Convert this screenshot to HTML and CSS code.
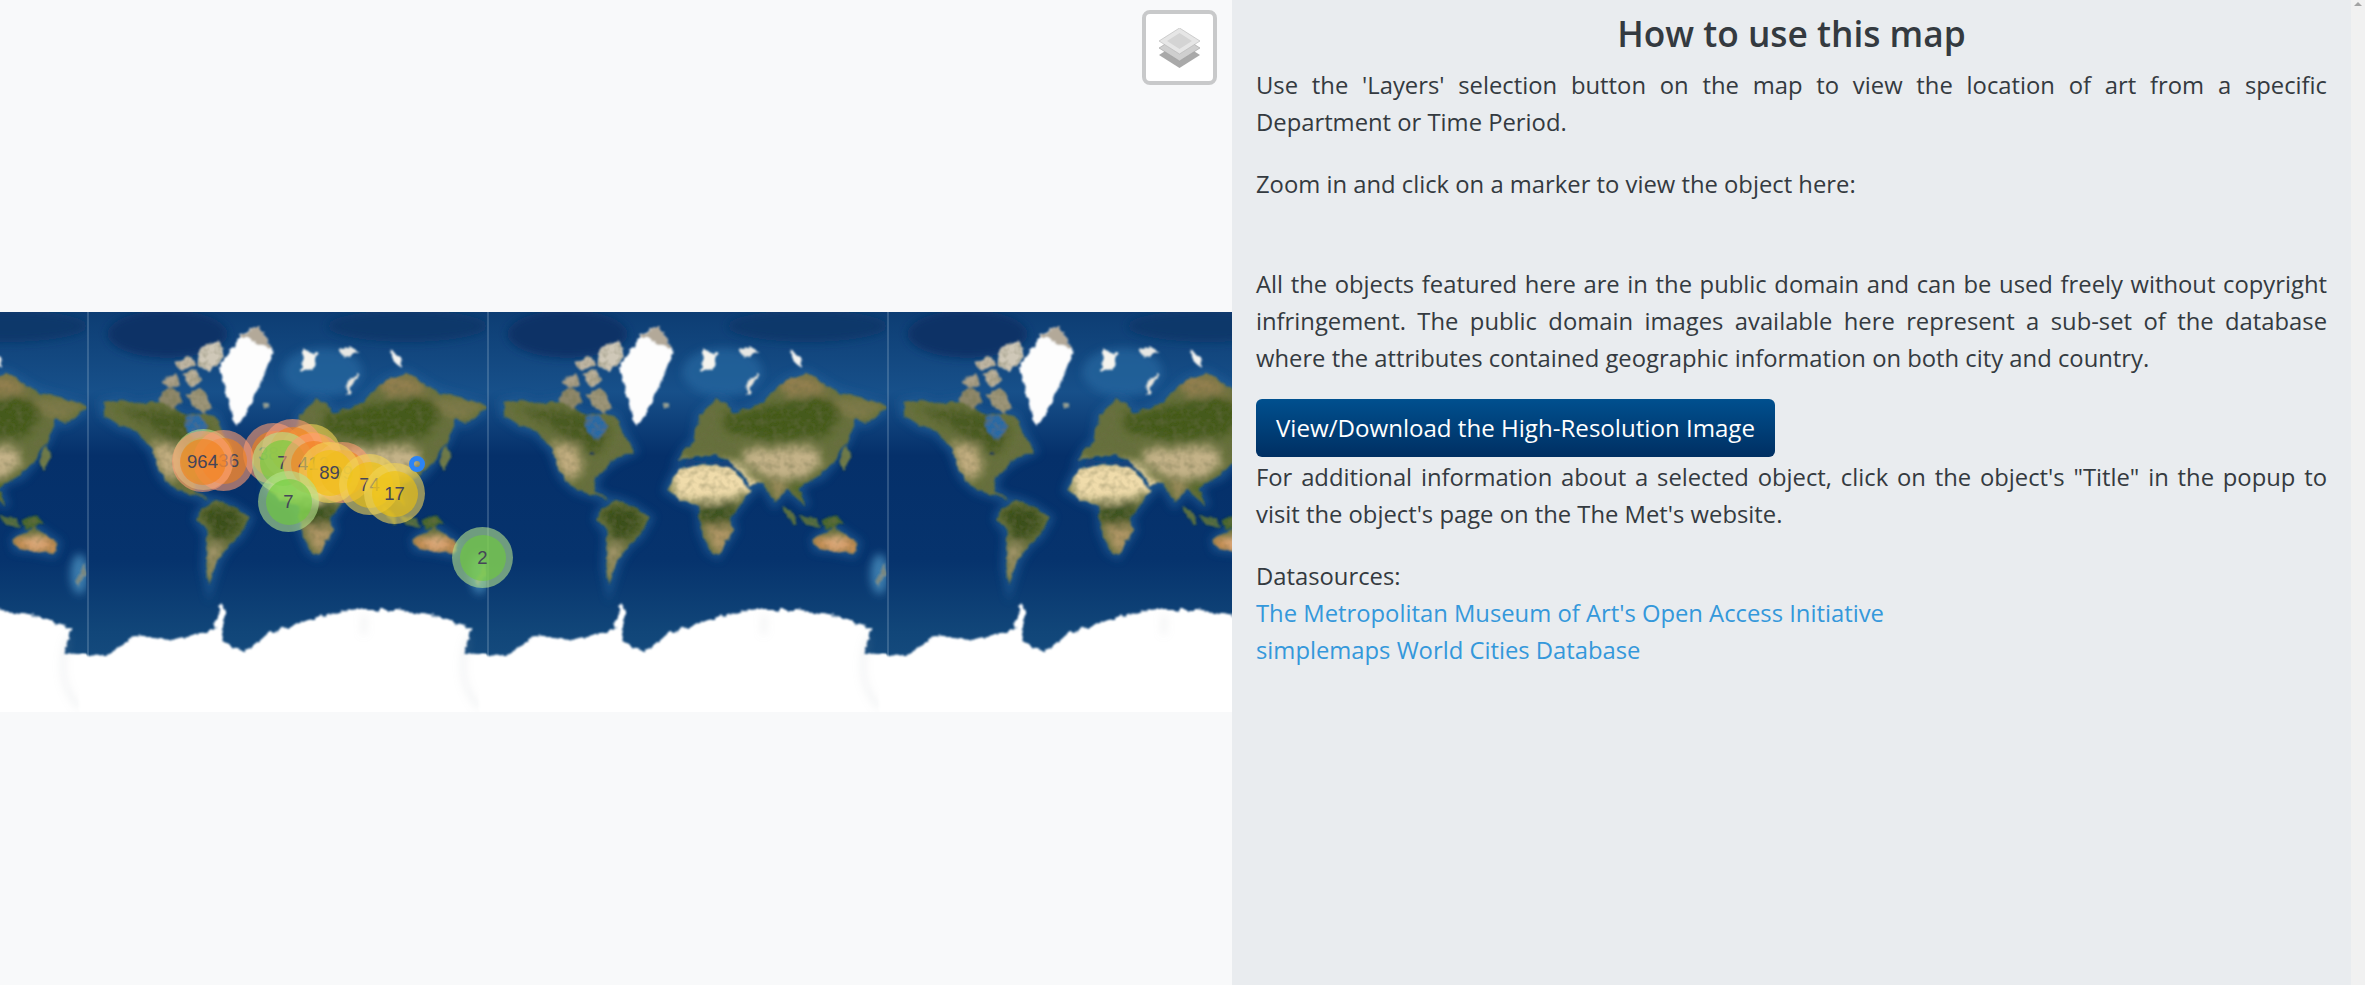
FILE: index.html
```html
<!DOCTYPE html>
<html lang="en">
<head>
  <meta charset="UTF-8" />
  <title>Met Art Map</title>
  <link rel="stylesheet" href="styles.css">
</head>
<body>

  <div class="map-col">
    <div class="map">
      <svg class="map-tiles" width="1232" height="400" viewBox="0 0 1232 400">
        <defs>
          <linearGradient id="sea" x1="0" y1="0" x2="0" y2="1">
            <stop offset="0" stop-color="#0d3d73"/>
            <stop offset="0.2" stop-color="#17508a"/>
            <stop offset="0.36" stop-color="#05306a"/>
            <stop offset="0.62" stop-color="#06336d"/>
            <stop offset="0.8" stop-color="#114679"/>
            <stop offset="1" stop-color="#1a5285"/>
          </linearGradient>
          <filter id="rough" x="-20" y="-20" width="460" height="440" filterUnits="userSpaceOnUse">
            <feTurbulence type="fractalNoise" baseFrequency="0.09" numOctaves="4" seed="4" result="n"/>
            <feDisplacementMap in="SourceGraphic" in2="n" scale="7" xChannelSelector="R" yChannelSelector="G" result="d"/>
            <feGaussianBlur in="d" stdDeviation="0.8" result="b"/>
            <feTurbulence type="fractalNoise" baseFrequency="0.14" numOctaves="2" seed="11"/>
            <feColorMatrix type="matrix" values="0 0 0 0 0.15  0 0 0 0 0.16  0 0 0 0 0.06  0.9 0 0 0 -0.36"/>
            <feComposite in2="b" operator="in" result="m"/>
            <feMerge>
              <feMergeNode in="b"/>
              <feMergeNode in="m"/>
            </feMerge>
          </filter>
          <filter id="ice" x="-20" y="-20" width="460" height="440" filterUnits="userSpaceOnUse">
            <feTurbulence type="fractalNoise" baseFrequency="0.14" numOctaves="4" seed="7" result="n"/>
            <feDisplacementMap in="SourceGraphic" in2="n" scale="7" xChannelSelector="R" yChannelSelector="G"/>
            <feGaussianBlur stdDeviation="0.8"/>
          </filter>
          <filter id="soft" x="-20" y="-20" width="460" height="440" filterUnits="userSpaceOnUse">
            <feGaussianBlur stdDeviation="4.5"/>
          </filter>
          <filter id="shelf" x="-20" y="-20" width="460" height="440" filterUnits="userSpaceOnUse">
            <feGaussianBlur stdDeviation="4"/>
          </filter>

          <g id="land-shapes">
            <polygon points="15,91 33,88 48,92 61,91 77,88 92,101 98,104 112,102 128,104 134,118 146,139 130,146 122,151 112,160 108,168 106,179 122,188 110,184 90,178 78,168 73,161 65,138 49,119 33,114 17,103"/>
            <polygon points="112,201 128,188 144,194 162,206 152,224 140,234 130,250 122,274 118,254 120,221 110,207"/>
            <polygon points="180,178 186,164 192,158 216,151 248,158 256,170 265,178 251,194 242,207 246,218 230,243 222,238 214,218 212,194 196,188"/>
            <polygon points="192,148 198,138 208,128 212,104 228,88 240,92 244,101 258,98 275,91 290,76 299,68 319,61 340,74 354,81 380,88 402,94 378,111 368,108 358,131 346,150 334,164 318,170 311,178 319,194 307,184 300,176 287,191 275,171 263,174 252,158 240,148 228,144 208,144"/>
            <polygon points="327,228 346,214 354,220 370,231 366,242 346,238 329,236"/>
          </g>
          <clipPath id="land-clip">
            <polygon points="15,91 33,88 48,92 61,91 77,88 92,101 98,104 112,102 128,104 134,118 146,139 130,146 122,151 112,160 108,168 106,179 122,188 110,184 90,178 78,168 73,161 65,138 49,119 33,114 17,103"/>
            <polygon points="112,201 128,188 144,194 162,206 152,224 140,234 130,250 122,274 118,254 120,221 110,207"/>
            <polygon points="180,178 186,164 192,158 216,151 248,158 256,170 265,178 251,194 242,207 246,218 230,243 222,238 214,218 212,194 196,188"/>
            <polygon points="192,148 198,138 208,128 212,104 228,88 240,92 244,101 258,98 275,91 290,76 299,68 319,61 340,74 354,81 380,88 402,94 378,111 368,108 358,131 346,150 334,164 318,170 311,178 319,194 307,184 300,176 287,191 275,171 263,174 252,158 240,148 228,144 208,144"/>
            <polygon points="327,228 346,214 354,220 370,231 366,242 346,238 329,236"/>
          </clipPath>

          <g id="tile">
            <rect x="-1" y="0" width="402" height="400" fill="url(#sea)"/>
            <line x1="0.5" y1="0" x2="0.5" y2="400" stroke="#a9c0d4" stroke-opacity="0.5"/>
            <!-- deep patches and shelves -->
            <ellipse cx="80" cy="22" rx="60" ry="24" fill="#0a3366" filter="url(#shelf)"/>
            <ellipse cx="320" cy="14" rx="80" ry="16" fill="#0b376b" filter="url(#shelf)"/>
            <ellipse cx="235" cy="60" rx="40" ry="24" fill="#2667a0" filter="url(#shelf)" opacity="0.7"/>
            <use href="#land-shapes" fill="#245f98" stroke="#245f98" stroke-width="8" filter="url(#shelf)" opacity="0.7"/>
            <polygon points="200,146 250,150 262,168 250,160 216,152 194,156" fill="#0e3d74" filter="url(#shelf)"/>
            <ellipse cx="392" cy="262" rx="9" ry="20" fill="#3b7cae" filter="url(#shelf)"/>

            <g filter="url(#rough)">
              <use href="#land-shapes" fill="#66703c"/>
              <g clip-path="url(#land-clip)">
                <g filter="url(#soft)">
                  <!-- siberia and canada forest -->
                  <polygon points="235,104 290,92 340,84 356,98 340,124 280,128 240,120" fill="#445a1c"/>
                  <polygon points="30,96 90,100 122,118 112,142 84,130 60,112" fill="#485a20"/>
                  <polygon points="292,62 322,62 344,82 296,84" fill="#927f50"/>
                  <polygon points="340,84 400,92 372,110 352,100" fill="#7f7a48"/>
                  <!-- american west -->
                  <polygon points="64,130 88,134 96,158 80,170 68,150" fill="#c2ad80"/>
                  <!-- central asia, arabia, india -->
                  <polygon points="256,138 326,134 336,152 310,168 278,164 258,152" fill="#c4b288"/>
                  <polygon points="250,156 272,170 270,186 258,176" fill="#e4cd9a"/>
                  <polygon points="280,166 300,172 290,190" fill="#a39060"/>
                  <polygon points="306,166 324,164 318,190 306,184" fill="#54692c"/>
                  <!-- africa -->
                  <polygon points="176,150 252,150 270,178 240,188 190,190" fill="#f0dcab"/>
                  <polygon points="206,192 250,190 244,210 218,212" fill="#3c5220"/>
                  <polygon points="216,214 250,214 232,246" fill="#b49868"/>
                  <!-- south america -->
                  <polygon points="112,196 148,194 156,216 130,232" fill="#3a501c"/>
                  <polygon points="118,234 136,232 124,276" fill="#a8996e"/>
                  <!-- australia -->
                  <polygon points="325,225 372,225 372,246 325,240" fill="#c58d52"/>
                  <polygon points="336,224 356,224 360,236 342,236" fill="#e2ae80"/>
                </g>
              </g>
              <!-- hudson bay and great lakes -->
              <polygon points="97,106 112,103 120,116 110,128 100,120" fill="#2c6ba4"/>
              <circle cx="104" cy="141" r="2" fill="#1d3a52"/>
              <!-- canadian arctic -->
              <polygon points="70,88 80,76 92,80 96,92 84,96" fill="#8d8668"/>
              <polygon points="98,82 112,76 124,94 118,102 106,94" fill="#9c9478"/>
              <polygon points="74,68 88,62 94,72 82,76" fill="#a99f88"/>
              <polygon points="96,62 108,58 114,70 102,74" fill="#b8ae98"/>
              <polygon points="86,50 100,44 108,54 94,58" fill="#bdb4a2"/>
              <polygon points="112,36 132,28 136,44 122,58 110,54" fill="#cfc8b8"/>
              <!-- indonesia and japan -->
              <polygon points="296,194 306,200 308,212 298,206" fill="#58703f"/>
              <polygon points="310,204 326,206 334,214 318,212" fill="#4f6a3f"/>
              <polygon points="334,208 352,205 356,212 338,216" fill="#48662f"/>
              <polygon points="358,132 364,144 356,158 352,150" fill="#6e7a48"/>
              <polygon points="396,250 399,262 392,276 388,270" fill="#7d8f8f"/>
              <polygon points="176,92 182,90 184,96 178,97" fill="#9aa39a"/>
            </g>

            <g filter="url(#ice)">
              <!-- greenland -->
              <polygon points="132,54 146,34 152,24 172,14 186,38 176,64 160,101 148,114 140,88" fill="#fdfdfd"/>
              <polygon points="150,26 172,14 186,38 178,34 160,26" fill="#b3a999"/>
              <!-- svalbard, franz josef, novaya zemlya -->
              <polygon points="216,35 230,42 226,56 214,60" fill="#f4f3ee"/>
              <polygon points="252,38 262,34 272,40 258,46" fill="#e7e7e4"/>
              <polygon points="303,38 312,44 316,56 306,50" fill="#f3f3f0"/>
              <path d="M272 62 Q260 70 260 84" fill="none" stroke="#e8e6de" stroke-width="3"/>
              <!-- antarctica -->
              <polygon points="-8,343 19,344 47,324 83,328 126,318 134,292 138,296 134,328 158,341 181,321 221,308 261,298 308,298 348,304 383,316 377,341 408,343 408,408 -8,408" fill="#fff"/>
            </g>
            <path d="M381 325 Q372 350 378 372 Q382 385 392 396" fill="none" stroke="#aab0b6" stroke-opacity="0.55" stroke-width="1.5" filter="url(#soft)"/>
            <path d="M277 303 L276 322" fill="none" stroke="#b8bcc0" stroke-opacity="0.5" stroke-width="2" filter="url(#soft)"/>
          </g>
        </defs>
        <use href="#tile" x="-312.5"/>
        <use href="#tile" x="87.5"/>
        <use href="#tile" x="487.5"/>
        <use href="#tile" x="887.5"/>
      </svg>

      <!-- cluster markers, later ones lie on top -->
      <div class="pin small pin-a"><span></span></div>
      <div class="pin large pin-d"><span>387</span></div>
      <div class="pin medium pin-g"><span></span></div>
      <div class="pin large pin-f"><span></span></div>
      <div class="pin large pin-b"><span>436</span></div>
      <div class="pin large pin-c"><span>964</span></div>
      <div class="pin small pin-e"><span>7</span></div>
      <div class="pin large pin-h"><span>412</span></div>
      <div class="pin large pin-i"><span>99</span></div>
      <div class="pin medium pin-j"><span>89</span></div>
      <div class="pin medium pin-k"><span>74</span></div>
      <div class="pin medium pin-l"><span>17</span></div>
      <div class="pin small pin-m"><span>7</span></div>
      <div class="pin small pin-n"><span>2</span></div>
      <div class="dot-marker"></div>
    </div>

    <button class="layers-btn" aria-label="Layers">
      <svg width="41" height="40" viewBox="0 0 41 40">
        <polygon points="20.5,14 41,27 20.5,40 0,27" fill="#a9a9a9"/>
        <polygon points="20.5,7 41,20 20.5,33 0,20" fill="#cfcfcf" stroke="#a0a0a0" stroke-width="0.6"/>
        <polygon points="20.5,0 41,13 20.5,26 0,13" fill="#e6e6e6" stroke="#b5b5b5" stroke-width="0.6"/>
        <polygon points="20.5,5 33,13 20.5,21 8,13" fill="#d4d4d4"/>
      </svg>
    </button>
  </div>

  <main class="panel">
    <h2>How to use this map</h2>
    <p>Use the 'Layers' selection button on the map to view the location of art from a specific Department or Time Period.</p>
    <p>Zoom in and click on a marker to view the object here:</p>
    <div class="object-view"></div>
    <p class="tight">All the objects featured here are in the public domain and can be used freely without copyright infringement. The public domain images available here represent a sub-set of the database where the attributes contained geographic information on both city and country.</p>
    <a class="btn" href="#">View/Download the High-Resolution Image</a>
    <p>For additional information about a selected object, click on the object's "Title" in the popup to visit the object's page on the The Met's website.</p>
    <p class="sources">
      Datasources:<br>
      <a href="#">The Metropolitan Museum of Art's Open Access Initiative</a><br>
      <a href="#">simplemaps World Cities Database</a>
    </p>
  </main>

  <div class="scrollbar"><div class="scroll-up"></div></div>

</body>
</html>
```
FILE: styles.css
```css
html, body {
  height: 100%;
}

body {
  display: flex;
  margin: 0;
  height: 985px;
  overflow: hidden;
  background: #f8f9fa;
  color: #343a40;
  font-family: "Open Sans", "Noto Sans", Arial, sans-serif;
  font-size: 23.8px;
  line-height: 37px;
}

/* Map side */
.map-col {
  position: relative;
  flex: 0 0 1232px;
  padding-top: 312px;
  box-sizing: border-box;
  overflow: hidden;
}

.map {
  position: relative;
  width: 1232px;
  height: 400px;
  overflow: hidden;
}

.map-tiles {
  display: block;
}

.layers-btn {
  position: absolute;
  top: 10px;
  left: 1142px;
  width: 75px;
  height: 75px;
  padding: 0;
  display: flex;
  align-items: center;
  justify-content: center;
  background: #fff;
  border: 4px solid #c8c9ca;
  border-radius: 8px;
}

/* Cluster markers */
.pin {
  position: absolute;
  width: 61px;
  height: 61px;
  margin: -30px 0 0 -30px;
  border-radius: 50%;
  display: flex;
  align-items: center;
  justify-content: center;
  font: 18.5px "Liberation Sans", Arial, sans-serif;
  color: #454558;
}

.pin span {
  width: 46px;
  height: 46px;
  border-radius: 50%;
  display: flex;
  align-items: center;
  justify-content: center;
}

.small { background: rgba(181, 226, 140, 0.6); }
.small span { background: rgba(110, 204, 57, 0.6); }
.medium { background: rgba(241, 211, 87, 0.6); }
.medium span { background: rgba(240, 194, 12, 0.6); }
.large { background: rgba(253, 156, 115, 0.6); }
.large span { background: rgba(241, 128, 23, 0.6); }

.pin-a { left: 203px; top: 147px; }
.pin-b { left: 223px; top: 148px; }
.pin-c { left: 202px; top: 149px; }
.pin-d { left: 273px; top: 141px; }
.pin-e { left: 282px; top: 150px; }
.pin-f { left: 292px; top: 137px; }
.pin-g { left: 310px; top: 142px; }
.pin-h { left: 313px; top: 151px; }
.pin-i { left: 342px; top: 160px; }
.pin-j { left: 329px; top: 160px; }
.pin-k { left: 369px; top: 172px; }
.pin-l { left: 394px; top: 181px; }
.pin-m { left: 288px; top: 189px; }
.pin-n { left: 482px; top: 245px; }

.dot-marker {
  position: absolute;
  left: 409px;
  top: 144px;
  width: 6px;
  height: 6px;
  border: 5px solid #2c84f5;
  border-radius: 50%;
}

/* Text side */
.panel {
  flex: 1;
  box-sizing: border-box;
  padding: 7px 24px 0;
  background: #e9ecef;
  text-align: justify;
}

.panel h2 {
  margin: -1px 0 7px;
  font-size: 35.3px;
  font-weight: 600;
  line-height: 54px;
  text-align: center;
}

.panel p {
  margin: 0 0 24.6px;
}

.panel p.tight {
  margin-bottom: 22px;
}

.object-view {
  height: 39px;
}

.panel a {
  color: #3498db;
  text-decoration: none;
}

.panel .btn {
  display: block;
  width: fit-content;
  margin-bottom: 2px;
  padding: 10px 20px;
  background: linear-gradient(#00508f, #002f62);
  border-radius: 6px;
  color: #fff;
  font-size: 24.1px;
  line-height: 38px;
}

.sources {
  text-align: left;
}

.scrollbar {
  flex: 0 0 14px;
  background: #f1f1f1;
}

.scroll-up {
  width: 0;
  margin: 2px auto 0;
  border: 4px solid transparent;
  border-top: 0;
  border-bottom-color: #a3a3a3;
}
```
